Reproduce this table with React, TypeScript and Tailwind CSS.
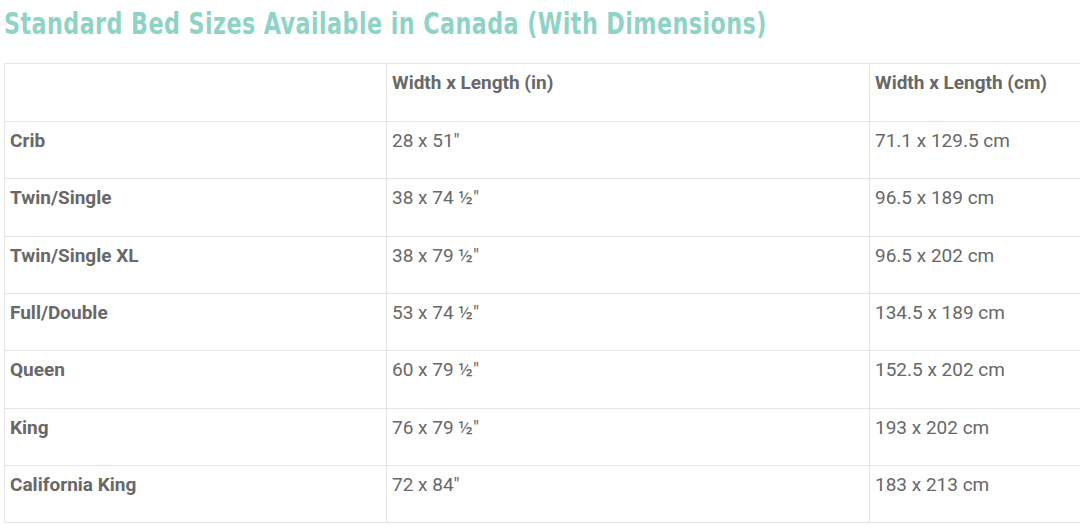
import React from 'react';

const rows: [string, string, string][] = [
  ['Crib', '28 x 51"', '71.1 x 129.5 cm'],
  ['Twin/Single', '38 x 74 ½"', '96.5 x 189 cm'],
  ['Twin/Single XL', '38 x 79 ½"', '96.5 x 202 cm'],
  ['Full/Double', '53 x 74 ½"', '134.5 x 189 cm'],
  ['Queen', '60 x 79 ½"', '152.5 x 202 cm'],
  ['King', '76 x 79 ½"', '193 x 202 cm'],
  ['California King', '72 x 84"', '183 x 213 cm'],
];

const cell = 'align-top border border-[#e5e5e5] px-[5px] pt-[5px] text-left';

const App: React.FC = () => {
  return (
    <div className="w-[1080px] h-[531px] overflow-hidden bg-white">
      {/* Title */}
      <div className="pl-[4px] pt-[4px] h-[44px]">
        <h2
          className="origin-left scale-x-[0.826] text-[30px] leading-[40px] font-bold tracking-[0.5px] text-[#8fd3c6] whitespace-nowrap"
          style={{ fontFamily: '"Liberation Sans Narrow", "DejaVu Sans Condensed", sans-serif' }}
        >
          Standard Bed Sizes Available in Canada (With Dimensions)
        </h2>
      </div>

      {/* Table */}
      <div className="pl-[4px] pt-[19px]">
        <table
          className="w-[1350px] border-collapse text-[19px] leading-[28px] text-[#686868]"
          style={{ fontFamily: 'Roboto, "Liberation Sans", sans-serif' }}
        >
          <colgroup>
            <col className="w-[382px]" />
            <col className="w-[483px]" />
            <col />
          </colgroup>
          <thead>
            <tr className="h-[58px]">
              <th className={cell + ' font-bold'}></th>
              <th className={cell + ' font-bold'}>Width x Length (in)</th>
              <th className={cell + ' font-bold'}>Width x Length (cm)</th>
            </tr>
          </thead>
          <tbody>
            {rows.map(([name, inch, cm]) => (
              <tr key={name} className="h-[57.33px]">
                <td className={cell + ' font-bold'}>{name}</td>
                <td className={cell}>{inch}</td>
                <td className={cell}>{cm}</td>
              </tr>
            ))}
          </tbody>
        </table>
      </div>
    </div>
  );
};

export default App;
